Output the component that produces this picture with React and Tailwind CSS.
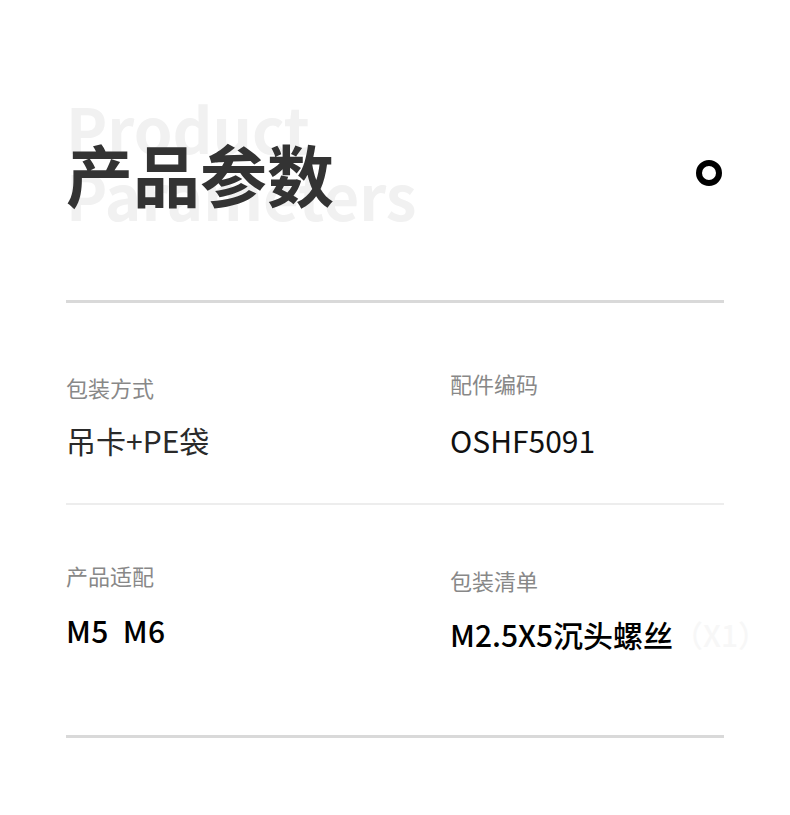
export default function App() {
  const font = { fontFamily: '"Noto Sans CJK SC", "Noto Sans", sans-serif' };
  return (
    <div className="w-[790px] h-[815px] bg-white px-[66px] overflow-hidden" style={font}>
      <div className="relative h-[300px]">
        <div className="absolute left-0 top-[94px] text-[62px] font-bold leading-[67px] text-[#f1f1f1]">
          <div>Product</div>
          <div>Parameters</div>
        </div>
        <div className="relative flex items-center justify-between pt-[128px]">
          <div className="text-[67px] font-bold leading-[90px] text-[#333333]">产品参数</div>
          <div className="w-[26px] h-[26px] rounded-full border-[6px] border-black mr-[2px]" />
        </div>
      </div>
      <div className="h-[3px] bg-[#d9d9d9]" />
      <div className="grid grid-cols-[384px_1fr] h-[200px]">
        <div className="pt-[69px]">
          <div className="text-[22px] leading-[30px] text-[#888888]">包装方式</div>
          <div className="mt-[20px] text-[30px] leading-[36px] text-[#2a2a2a]">吊卡+PE袋</div>
        </div>
        <div className="pt-[65px]">
          <div className="text-[22px] leading-[30px] text-[#888888]">配件编码</div>
          <div className="mt-[24px] text-[30px] leading-[36px] text-[#111111]">OSHF5091</div>
        </div>
      </div>
      <div className="h-[2px] bg-[#ededed]" />
      <div className="grid grid-cols-[384px_1fr] h-[230px]">
        <div className="pt-[55px]">
          <div className="text-[22px] leading-[30px] text-[#888888]">产品适配</div>
          <div className="mt-[22px] text-[30px] font-medium leading-[36px] text-black whitespace-pre tracking-[0.3px]">M5  M6</div>
        </div>
        <div className="pt-[60px]">
          <div className="text-[22px] leading-[30px] text-[#888888]">包装清单</div>
          <div className="mt-[21px] text-[30px] font-medium leading-[36px] text-black whitespace-nowrap">
            M2.5X5沉头螺丝<span className="text-[#f7f7f7]">（X1）</span>
          </div>
        </div>
      </div>
      <div className="h-[3px] bg-[#d9d9d9]" />
    </div>
  );
}
